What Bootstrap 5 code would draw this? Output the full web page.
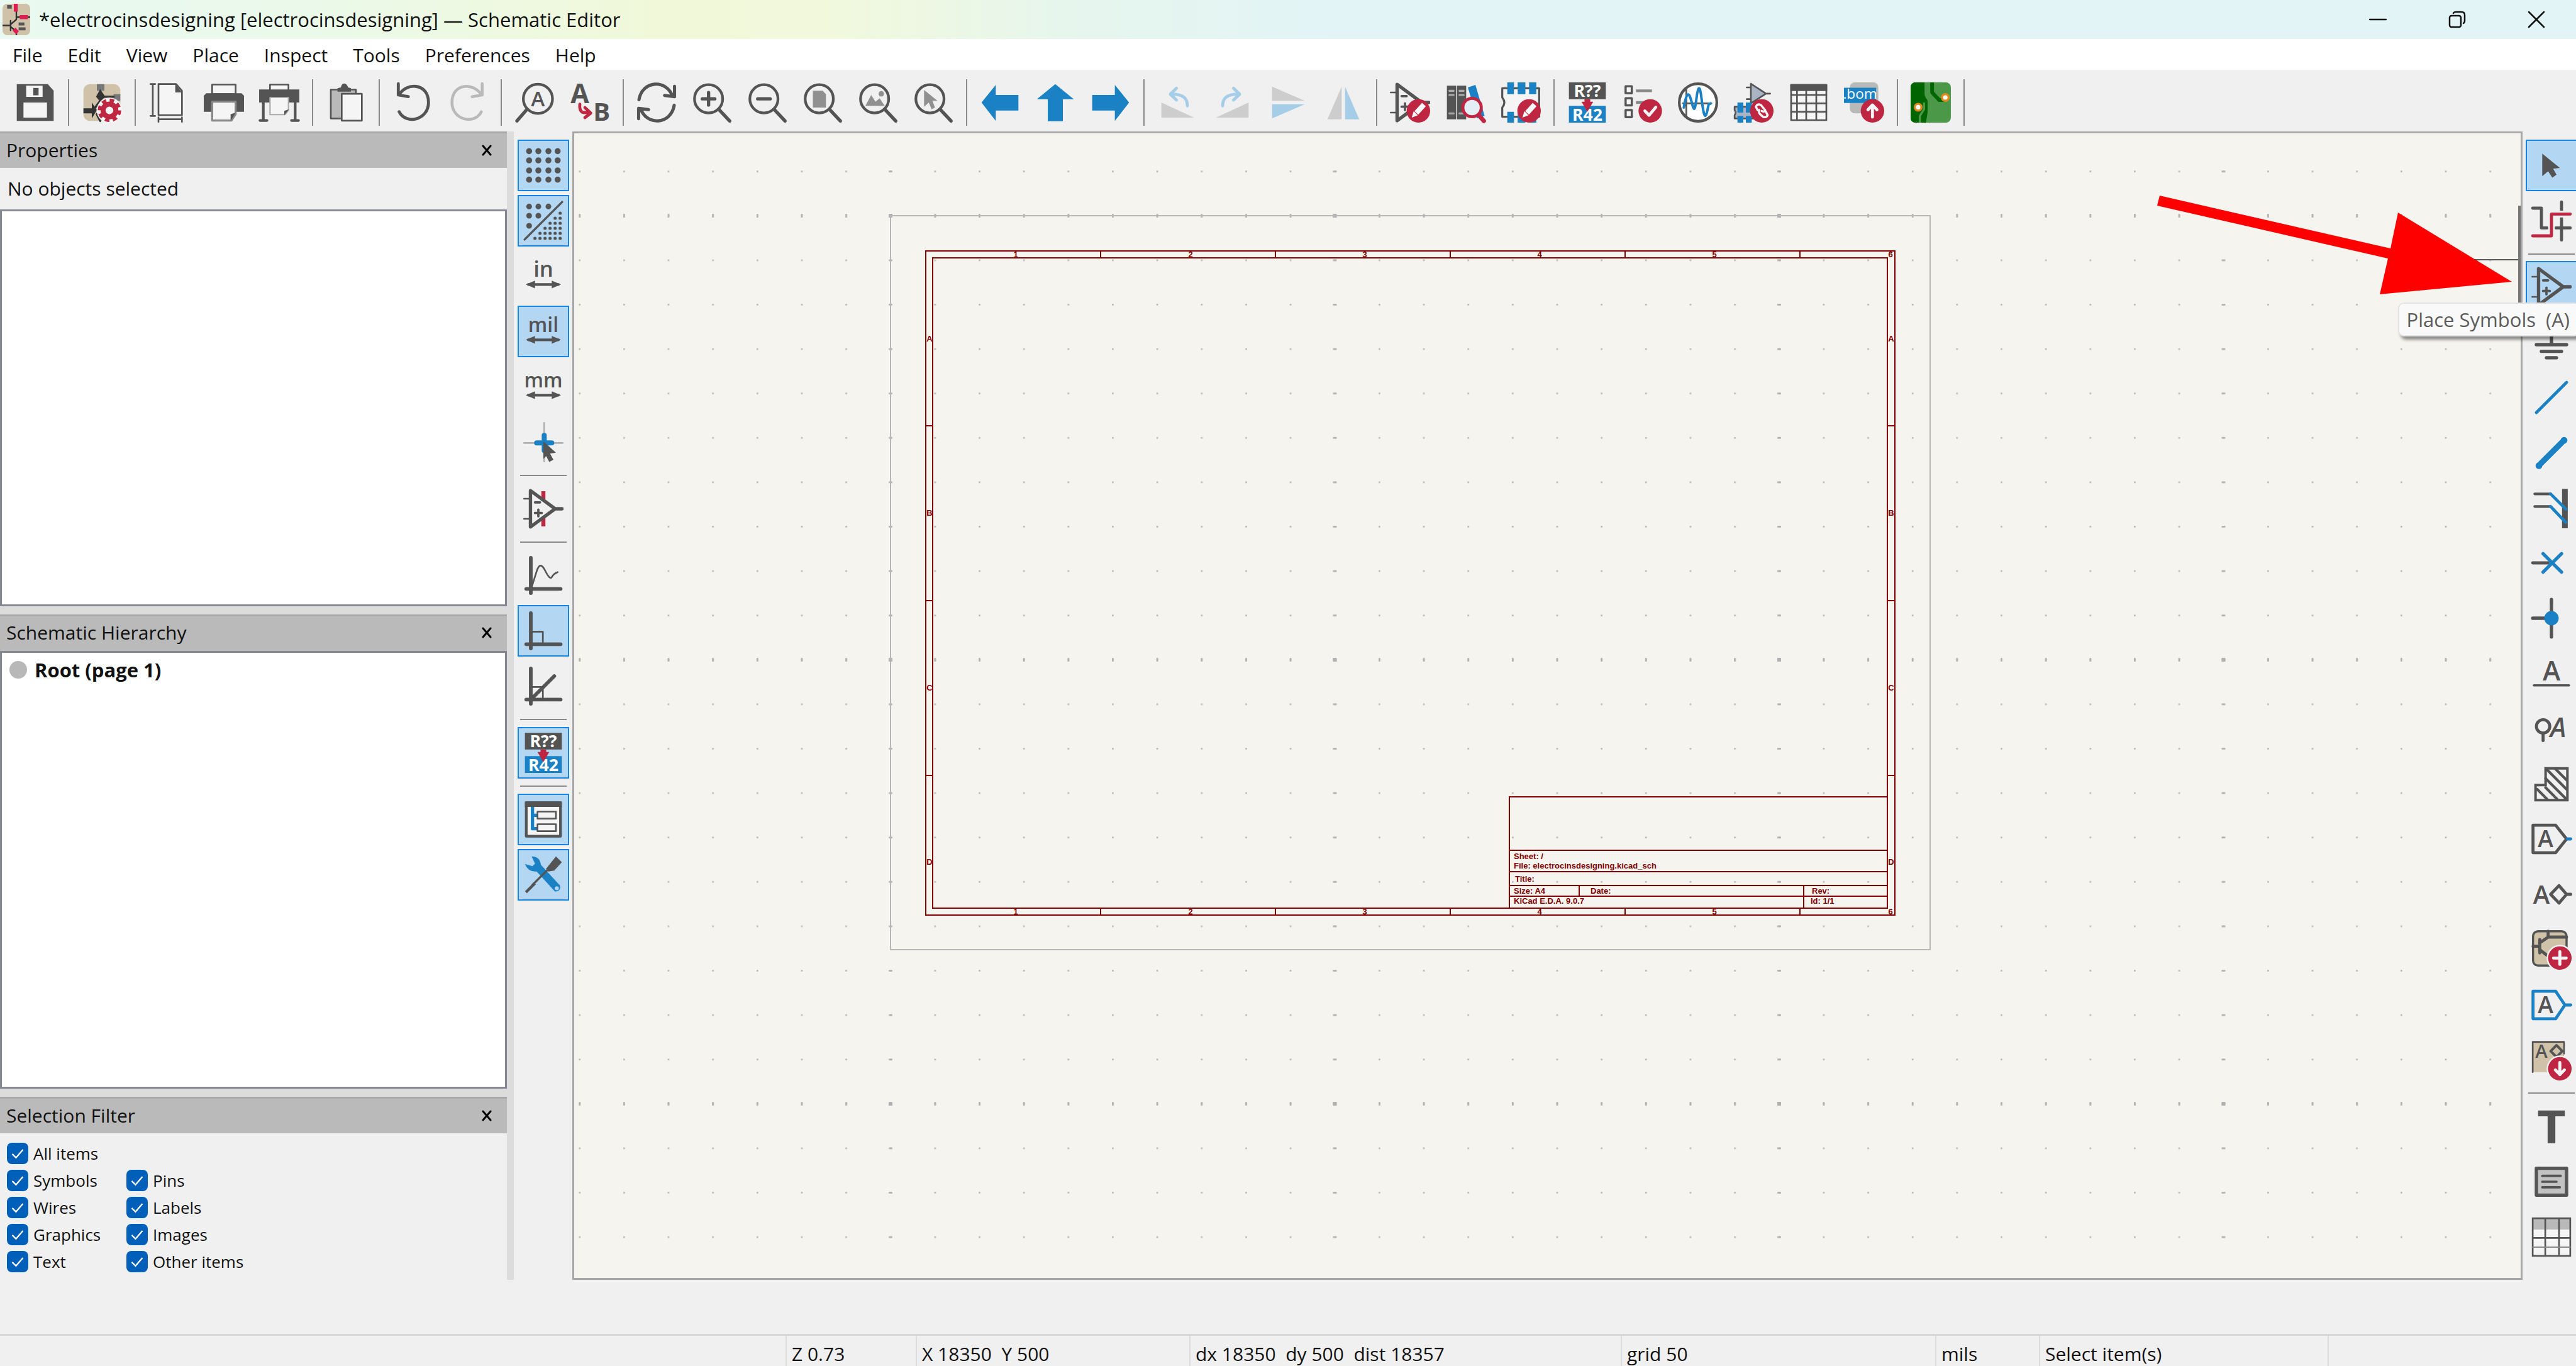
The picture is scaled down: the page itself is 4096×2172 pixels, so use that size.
<!DOCTYPE html>
<html lang="en">
<head>
<meta charset="utf-8">
<meta name="viewport" content="width=device-width, initial-scale=1">
<title>*electrocinsdesigning [electrocinsdesigning] — Schematic Editor</title>
<link href="https://cdn.jsdelivr.net/npm/bootstrap@5.3.0/dist/css/bootstrap.min.css" rel="stylesheet">
<style>
  :root { --ink:#545454; --blue:#1a81c4; --crimson:#bf2641; --tan:#cfc2a9; --face:#f0f0f0; --sash:#dcdcdc; }
  body { font-family:"Open Sans","Noto Sans",sans-serif; font-size:30px; line-height:40px; color:#111; background:var(--face); }
  .titlebar { height:62px; background:linear-gradient(90deg,#e9f9f1 0%,#eaf9e9 12%,#f1f8d9 26%,#f1f8dc 32%,#e6f6ee 42%,#e2f4f6 52%,#e2f4f6 100%); padding-left:4px; font-size:31px; }
  .titlebar .app-icon { width:44px; height:50px; margin-right:14px; }
  .win-btn { width:126px; height:62px; }
  .win-btn svg { width:28px; height:28px; }
  .menubar { height:49px; background:#fff; gap:40px; padding:3px 0 0 20px; }
  .menubar a { color:#111; text-decoration:none; }
  .toolbar-top { height:98px; gap:6px; padding:6px 15px 0; }
  .toolbar-side { gap:6px; padding:13px 6px 0; width:93px; }
  .toolbar-right { width:85px; padding:13px 0 27px 5px; }
  .tool { width:82px; height:82px; border:2px solid transparent; --bs-btn-padding-x:0; --bs-btn-padding-y:0; line-height:0; }
  .tool svg { width:64px; height:64px; overflow:visible; }
  .tool.active, .tool.active:hover { background:#b3d6f3; border-color:#1985e0; }
  .tool-sep-v { width:12px; height:74px; }
  .tool-sep-h { height:12px; width:74px; }
  .tool-sep-v::before { content:""; display:block; width:2px; height:100%; margin:auto; background:#8a8a8a; }
  .tool-sep-h::before { content:""; display:block; height:2px; width:100%; margin-top:5px; background:#8a8a8a; }
  svg { fill:none; stroke-linecap:round; stroke-linejoin:round; }
  svg:not([stroke-width]) { stroke-width:1.6; }
  svg text { font-family:"Open Sans","Noto Sans",sans-serif; fill:var(--ink); }
  .st { stroke:var(--ink); }
  .thin { stroke:var(--ink); } .thin:not([stroke-width]) { stroke-width:1; }
  .sb { stroke:var(--blue); } .sb:not([stroke-width]) { stroke-width:1.8; }
  .sr { stroke:var(--crimson); } .sr:not([stroke-width]) { stroke-width:1.8; }
  .fi { fill:var(--ink); } .fb { fill:var(--blue); } .fr { fill:var(--crimson); } .ft { fill:var(--tan); }
  .fw { fill:#f5f5f5; } .fg { fill:#b9b9b9; } .sw { stroke:#f5f5f5; stroke-width:1.8; }
  .dock { width:806px; }
  .sash-v { width:11px; background:var(--sash); }
  .sash-h { height:13px; background:var(--sash); }
  .pane { flex:1 1 0; min-height:0; }
  .pane-head { height:58px; background:#bababa; border-top:3px solid #a9a9a9; padding:0 22px 2px 10px; }
  .pane-head button { width:20px; height:20px; line-height:0; }
  .pane-head svg { width:16px; height:18px; stroke:#000; stroke-width:3; }
  .pane-box { background:#fff; border:3px solid #828790; }
  .note-line { height:66px; padding-left:12px; }
  .tree-row { padding:7px 12px; gap:12px; font-size:31px; }
  .tree-dot { width:28px; height:28px; border-radius:50%; background:#b8b8b8; }
  .filters { padding:15px 11px 12px; gap:9px; font-size:26px; line-height:34px; }
  .filters .pick { width:190px; gap:8px; height:34px; }
  .filters .form-check-input { width:34px; height:34px; margin:0; border:0; border-radius:8px; background-color:#005fb8;
    background-image:url("data:image/svg+xml,%3Csvg xmlns='http://www.w3.org/2000/svg' viewBox='0 0 20 20'%3E%3Cpath fill='none' stroke='%23fff' stroke-width='1.3' d='M5 10.5l3.5 3.5 6.5-7.5'/%3E%3C/svg%3E"); }
  .canvas-area { background:#f5f4ef; border:3px solid #a6a6a6; min-width:0; }
  .canvas-area svg text { font-family:"Liberation Sans",sans-serif; font-weight:bold; fill:#840000; font-size:13px; }
  .sheet-lines { stroke:#840000; stroke-width:2; stroke-linecap:butt; stroke-linejoin:miter; }
  .pointer { position:absolute; left:0; top:0; width:100%; height:100%; pointer-events:none; }
  .tip { position:absolute; right:-6px; top:272px; height:54px; padding:0 14px 0 12px; background:#f9f9f9; color:#5c5c5c; font-size:31px; line-height:50px; border:2px solid #e4e4e4; border-radius:9px; box-shadow:4px 5px 5px rgba(0,0,0,.45); white-space:pre; }
  .msg { height:86px; }
  .statusbar { height:51px; border-top:3px solid #d8d8d8; line-height:58px; }
  .statusbar > div { border-left:2px solid #dcdcdc; padding-left:8px; white-space:pre; overflow:hidden; }
</style>
</head>
<body class="vh-100 d-flex flex-column overflow-hidden">

<svg width="0" height="0" class="position-absolute" aria-hidden="true">
  <symbol id="opamp" viewBox="0 0 24 24">
    <path class="thin" d="M.5 6H4M.5 18H4"/><path class="st" stroke-width="2" d="M4.3 1.200V22.800L19 12ZM19 12H23.200"/><path class="st" stroke-width="1.400" d="M7 8.200H10M7 14.500H11M9 12.500V16.500"/>
  </symbol>
  <symbol id="pencil" viewBox="0 0 24 24">
    <circle class="fr" cx="17" cy="17" r="7"/><path d="M20.300 13.200L15.800 18.200" stroke="#fff" stroke-width="3" stroke-linecap="butt"/><path fill="#fff" d="M14.200 17.200L16.600 19.600 13 21Z"/>
  </symbol>
  <symbol id="lens" viewBox="0 0 24 24"><circle class="st" cx="10" cy="9.800" r="8.400"/><path class="st" stroke-width="2" d="M16 16L22.600 23"/></symbol>
</svg>

<header class="titlebar d-flex align-items-center flex-shrink-0">
  <svg class="app-icon" viewBox="0 0 24 26" preserveAspectRatio="none">
    <rect class="ft" x="0" y="0" width="24" height="26" rx="4"/><path stroke="#333" stroke-width="1.300" d="M0 18H7M7 14V22M7 17L12 13V2M7 19L12 23V26M12 11H24"/>
    <path stroke="#de1d55" stroke-width="3.400" stroke-linecap="butt" d="M11.500 0V6.500M15 11H22M10 21L13 24"/><path fill="#555" d="M4 1H8V4H4ZM14 15.500H19V18H14ZM14 19.500H20V22H14Z"/>
  </svg>
  <span class="flex-grow-1 text-nowrap">*electrocinsdesigning [electrocinsdesigning] — Schematic Editor</span>
  <button class="btn p-0 border-0 rounded-0 win-btn" aria-label="Minimize"><svg viewBox="0 0 28 28" stroke="#111" stroke-width="2.500"><path d="M1 14H27"/></svg></button>
  <button class="btn p-0 border-0 rounded-0 win-btn" aria-label="Restore"><svg viewBox="0 0 28 28" stroke="#111" stroke-width="2.500"><rect x="2" y="8" width="18" height="18" rx="3"/><path d="M8 4Q9 2 12 2H21Q26 2 26 7V16Q26 19 24 20"/></svg></button>
  <button class="btn p-0 border-0 rounded-0 win-btn" aria-label="Close"><svg viewBox="0 0 28 28" stroke="#111" stroke-width="2.500"><path d="M2 2L26 26M26 2L2 26"/></svg></button>
</header>

<nav class="menubar d-flex align-items-center flex-shrink-0">
  <a href="#">File</a><a href="#">Edit</a><a href="#">View</a><a href="#">Place</a><a href="#">Inspect</a><a href="#">Tools</a><a href="#">Preferences</a><a href="#">Help</a>
</nav>

<div class="toolbar-top d-flex align-items-center flex-shrink-0" role="toolbar" aria-label="Main toolbar">
  <button class="btn rounded-0 tool" aria-label="Save"><svg viewBox="0 0 24 24"><path class="fi" d="M1 1H19.500L23 5V23H1Z"/><path class="fw" d="M6.600 2H16.400V8.600H6.600ZM5 12H19V21H5Z"/><path class="fi" d="M10.800 3.300H14V7.700H10.800Z"/></svg></button>
  <div class="tool-sep-v"></div>
  <button class="btn rounded-0 tool" aria-label="Schematic setup"><svg viewBox="0 0 24 24"><rect class="ft" x="1" y="1" width="22" height="22" rx="4"/><path fill="#777" d="M9 1H13.500V5H9ZM19 7H23V11H19Z"/><path fill="#333" d="M11 4L14 8.500 11 11.500 8.500 8.500ZM1 15.500H6V12L9 16.500 6 21.500V18.500H1Z"/><path stroke="#333" stroke-width="1.300" d="M13 8.500H19M8 15L11 11M9 19L11 23"/>
    <circle cx="16.500" cy="16.700" r="7.600" fill="#f5f5f5"/><circle cx="16.500" cy="16.700" r="3.800" stroke="#bf2641" stroke-width="3"/><circle cx="16.500" cy="16.700" r="5.800" stroke="#bf2641" stroke-width="2.400" stroke-linecap="butt" stroke-dasharray="2.550 2"/></svg></button>
  <div class="tool-sep-v"></div>
  <button class="btn rounded-0 tool" aria-label="Page settings"><svg viewBox="0 0 24 24"><path class="thin" d="M2.600 1V20M1.200 1H4M1.200 20H4M6 22H20M6 20.800V23.500M20 20.800V23.500"/><path class="thin fw" d="M6 1H16.500L20 5V19.500H6Z"/><path class="fi" d="M16 1L20 6H16Z"/></svg></button>
  <button class="btn rounded-0 tool" aria-label="Print"><svg viewBox="0 0 24 24"><path class="thin fw" d="M5 1.300H19V7H5Z"/><path class="fi" d="M1.500 6.500H22.500L24 8V17.500H0V8Z"/><path class="fw" stroke="#888" stroke-width="1.200" d="M5 11.500H19V19L16.500 22.700H5Z"/><path class="fi" d="M19 18L16 19V23Z"/></svg></button>
  <button class="btn rounded-0 tool" aria-label="Plot"><svg viewBox="0 0 24 24"><path class="thin fw" d="M6.500 1.300H17.500V5H6.500Z"/><path class="fi" d="M0 4.200H24V12H0Z"/><path class="st" d="M2.500 12V22.500M21.500 12V22.500M.5 22.700H4.700M19.300 22.700H23.500"/><path class="fw" stroke="#aaa" stroke-width=".8" d="M6.500 9H17.500V16.500L15.500 19.200H6.500Z"/><path class="fi" d="M17.800 16L15 17V19.500Z"/></svg></button>
  <div class="tool-sep-v"></div>
  <button class="btn rounded-0 tool" aria-label="Paste"><svg viewBox="0 0 24 24"><path class="thin fg" d="M3 4.300H18V21.500H3Z"/><path class="fi" d="M7 5.500V3.500L9 3Q9.500 .7 11 .7T13.300 3L15 3.500V5.500Z"/><path class="thin fw" d="M9.500 6.800H21.500V22.800H9.500Z"/></svg></button>
  <div class="tool-sep-v"></div>
  <button class="btn rounded-0 tool" aria-label="Undo"><svg viewBox="0 0 24 24"><path class="st" stroke-width="1.800" d="M3.500 .8V7.500L9.500 8.500M4 7.500C8 0 21.500 0 21.500 12C21.500 22.500 8 25.500 4 17.500"/></svg></button>
  <button class="btn rounded-0 tool" aria-label="Redo"><svg viewBox="0 0 24 24"><path stroke="#b9b9b9" stroke-width="1.700" d="M20.500 .8V7.500L14.500 8.500M20 7.500C16 0 2.500 0 2.500 12C2.500 22.500 16 25.500 20 17.500"/></svg></button>
  <div class="tool-sep-v"></div>
  <button class="btn rounded-0 tool" aria-label="Find"><svg viewBox="0 0 24 24"><circle class="st" cx="14" cy="9.800" r="8.700"/><path class="st" stroke-width="2" d="M7.500 16L1.500 23"/><text x="14" y="14.300" font-size="12.500" font-weight="600" text-anchor="middle">A</text></svg></button>
  <button class="btn rounded-0 tool" aria-label="Find and replace"><svg viewBox="0 0 24 24"><text x="6" y="12.500" font-size="16" font-weight="bold" text-anchor="middle">A</text><text x="19" y="23" font-size="15" font-weight="bold" text-anchor="middle">B</text><path class="sr" d="M6 13Q5.500 18 9 18H12M9 15L12.500 18.300 9 21"/></svg></button>
  <div class="tool-sep-v"></div>
  <button class="btn rounded-0 tool" aria-label="Refresh"><svg viewBox="0 0 24 24"><path class="st" stroke-width="1.900" d="M1.500 10.300C3.500-1.300 18-2 21.500 8.300M22.700 2.400V8.500L16.800 7.800M22.500 13.700C20.500 25.300 6 26 2.500 15.700M1.300 21.600V15.500L7.200 16.200"/></svg></button>
  <button class="btn rounded-0 tool" aria-label="Zoom in"><svg viewBox="0 0 24 24"><use href="#lens"/><path class="st" stroke-width="2" d="M6.300 9.800H13.700M10 6.100V13.500"/></svg></button>
  <button class="btn rounded-0 tool" aria-label="Zoom out"><svg viewBox="0 0 24 24"><use href="#lens"/><path class="st" stroke-width="2" d="M6.300 9.800H13.700"/></svg></button>
  <button class="btn rounded-0 tool" aria-label="Zoom to fit"><svg viewBox="0 0 24 24"><use href="#lens"/><path fill="#909090" d="M6.200 5H12L14 7V15H6.200Z"/></svg></button>
  <button class="btn rounded-0 tool" aria-label="Zoom to objects"><svg viewBox="0 0 24 24"><use href="#lens"/><path fill="#909090" d="M4.500 14L8 7.500 10.500 11.500 13 9.500 16 14Z"/><circle fill="#909090" cx="14" cy="6.800" r="1.600"/></svg></button>
  <button class="btn rounded-0 tool" aria-label="Zoom to selection"><svg viewBox="0 0 24 24"><use href="#lens"/><path fill="#909090" d="M6.500 4.500L14.500 11H11.500L13 15 11 16 9.300 12 6.500 14.500Z"/></svg></button>
  <div class="tool-sep-v"></div>
  <button class="btn rounded-0 tool" aria-label="Navigate back"><svg viewBox="0 0 24 24"><path class="fb" d="M1 12L9.500 1.500V7.500H23V16.800H9.500V23Z"/></svg></button>
  <button class="btn rounded-0 tool" aria-label="Navigate up"><svg viewBox="0 0 24 24"><path class="fb" d="M12 1L23 10H16.500V23.200H7.500V10H1Z"/></svg></button>
  <button class="btn rounded-0 tool" aria-label="Navigate forward"><svg viewBox="0 0 24 24"><path class="fb" d="M23 12L14.500 1.500V7.500H1V16.800H14.500V23Z"/></svg></button>
  <div class="tool-sep-v"></div>
  <button class="btn rounded-0 tool" aria-label="Rotate left"><svg viewBox="0 0 24 24"><path fill="#cdcdcd" d="M2.500 12V21H22Z"/><path stroke="#a5cde8" stroke-width="1.800" d="M18 14C18 9 15 7 8.500 7M11.500 3.500L7.800 7 11.500 10.500"/></svg></button>
  <button class="btn rounded-0 tool" aria-label="Rotate right"><svg viewBox="0 0 24 24"><path fill="#cdcdcd" d="M21.500 12V21H2Z"/><path stroke="#a5cde8" stroke-width="1.800" d="M6 14C6 9 9 7 15.500 7M12.500 3.500L16.200 7 12.500 10.500"/></svg></button>
  <button class="btn rounded-0 tool" aria-label="Mirror vertically"><svg viewBox="0 0 24 24"><path fill="#cdcdcd" d="M2.500 2.500V11H22Z"/><path fill="#a5cde8" d="M2.500 21.500V13H22Z"/></svg></button>
  <button class="btn rounded-0 tool" aria-label="Mirror horizontally"><svg viewBox="0 0 24 24"><path fill="#cdcdcd" d="M2.500 22H11V2.500Z"/><path fill="#a5cde8" d="M21.500 22H13V2.500Z"/></svg></button>
  <div class="tool-sep-v"></div>
  <button class="btn rounded-0 tool" aria-label="Symbol editor"><svg viewBox="0 0 24 24"><use href="#opamp"/><use href="#pencil"/></svg></button>
  <button class="btn rounded-0 tool" aria-label="Symbol library browser"><svg viewBox="0 0 24 24"><path class="fi" d="M1 2H6.500V22H1ZM7 2H12.500V22H7Z"/><path d="M2.500 5H5M2.500 7.500H5M8.500 5H11M8.500 7.500H11M2.500 18.500H5M8.500 18.500H11" stroke="#aaa" stroke-width="1.200"/><path class="fb" d="M13.500 3L18 1.500 23.500 20 19 21.500Z"/><circle cx="16" cy="15" r="5.500" fill="#e4eef5" stroke="#bf2641" stroke-width="1.800"/><path class="sr" stroke-width="2.600" d="M20 19.500L23 23"/></svg></button>
  <button class="btn rounded-0 tool" aria-label="Footprint editor"><svg viewBox="0 0 24 24"><path class="st fw" stroke-width="1.200" d="M1 3.500H23V20.500H1V15Q3.500 12 1 9Z"/><path class="fb" d="M4 0H8V7H4ZM10.200 0H14.800V7H10.200ZM17 0H21.300V7H17ZM4 17.500H8V24H4ZM10.200 17.500H14.800V24H10.200ZM17 17.500H21.300V24H17Z"/><use href="#pencil"/></svg></button>
  <div class="tool-sep-v"></div>
  <button class="btn rounded-0 tool" aria-label="Annotate"><svg viewBox="0 0 24 24"><path class="fi" d="M1 0H23V10H1Z"/><path class="fb" d="M1 14H23V24H1Z"/><text x="12" y="8.600" font-size="10" font-weight="bold" text-anchor="middle" style="fill:#fff">R??</text><text x="12" y="22.700" font-size="10" font-weight="bold" text-anchor="middle" style="fill:#fff">R42</text><path class="fr" d="M10.300 10H13.700V11.500H15.500L12 17.500 8.500 11.500H10.300Z"/></svg></button>
  <button class="btn rounded-0 tool" aria-label="Electrical rules checker"><svg viewBox="0 0 24 24"><path class="thin fw" stroke-width="1.300" d="M1.800 2.300H5.500V6.500H1.800ZM1.800 9.500H5.500V13.700H1.800ZM1.800 16.500H5.500V20.700H1.800Z"/><path stroke="#888" stroke-width="1.600" stroke-linecap="butt" d="M8 5H17.500M8 12H14"/><circle class="fr" cx="16.500" cy="17" r="7"/><path class="sw" d="M13.300 17L15.800 19.600 19.800 14.800"/></svg></button>
  <button class="btn rounded-0 tool" aria-label="Simulator"><svg viewBox="0 0 24 24"><circle class="st" cx="12" cy="12" r="11.200" style="fill:#fff"/><path class="thin" d="M5 4V20M3 12.500H20"/><path class="sb" stroke-width="1.500" d="M3.500 15C5 6 6.500 5 8 11S10 18 11 10 13 1 14 9 16 24 17.500 17 18 14 19.500 12.500"/></svg></button>
  <button class="btn rounded-0 tool" aria-label="Assign footprints"><svg viewBox="0 0 24 24"><path class="thin" fill="#a9b5c4" d="M10.500 .8V12.500L19.500 6.700ZM8 3H10.500M8 10H10.500M19.500 6.700H22"/><path class="thin" fill="#a9b5c4" d="M.8 14.500H16V21.500H.8V19.500Q2 18 .8 16.500Z"/><path class="fb" d="M2.500 12H6V18H2.500ZM7.500 12H11V18H7.500ZM2.500 20H6V24H2.500ZM7.500 20H11V24H7.500Z"/><circle class="fr" cx="17" cy="17" r="7"/><path stroke="#f5f5f5" stroke-width="1.300" d="M14.500 16.500L13.500 14.500Q14.500 12.500 16.500 13.500L19 16.500Q18.500 18 17 17M15.500 16.500Q15 18 16 19L18 20.700Q20 21 20.500 19.500L19.500 17.500"/></svg></button>
  <button class="btn rounded-0 tool" aria-label="Bulk edit fields"><svg viewBox="0 0 24 24"><path class="thin fw" d="M1.500 1.500H22.500V22.500H1.500Z"/><path class="fi" d="M1 1H23V5.200H1Z"/><path class="thin" d="M1.500 7.500H22.500M1.500 12.500H22.500M1.500 17.500H22.500M5 5V22.500M10.500 5V22.500M16.500 5V22.500"/></svg></button>
  <button class="btn rounded-0 tool" aria-label="Generate BOM"><svg viewBox="0 0 24 24"><rect class="fg" x="3.500" y="0" width="17" height="18.500" rx="3"/><path class="fb" d="M0 3.200H19.200V12.300H0Z"/><text x="9.600" y="9.800" font-size="8.500" text-anchor="middle" style="fill:#fff">.bom</text><circle class="fr" cx="17" cy="17" r="7"/><path class="sw" d="M17 20.700V13.700M14.300 16.300L17 13.500 19.700 16.300"/></svg></button>
  <div class="tool-sep-v"></div>
  <button class="btn rounded-0 tool" aria-label="Open PCB editor"><svg viewBox="0 0 24 24"><rect x="0" y="0" width="24" height="24" rx="3" fill="#4a9848"/><path fill="#006400" d="M3 0H4V11L8.500 14V24H3Q0 24 0 21V3Q0 0 3 0Z"/><path stroke="#006400" stroke-width="2.200" stroke-linecap="butt" d="M3 0V14M7.200 0V7Q7.500 9.500 9 11V18L8 24M12.800 0V6L17 10.500H20"/><path fill="#006400" d="M2 0H8V8L10 12 6 16H2Z"/><path stroke="#4a9848" stroke-width="1.300" stroke-linecap="butt" d="M10.300 0V7L13 12V17L11 24M5.500 24V20L8 16V12"/><circle cx="20.700" cy="9" r="2" fill="#fff" stroke="#e08a1e" stroke-width="1.300"/><circle cx="4.500" cy="14.800" r="2" fill="#fff" stroke="#e08a1e" stroke-width="1.300"/></svg></button>
  <div class="tool-sep-v"></div>
</div>

<main class="d-flex flex-grow-1 position-relative overflow-hidden" style="min-height:0">
  <aside class="dock d-flex flex-column flex-shrink-0">
    <section class="pane d-flex flex-column">
      <div class="pane-head d-flex align-items-center justify-content-between"><span>Properties</span><button class="btn p-0 border-0" aria-label="Close Properties"><svg viewBox="0 0 16 18"><path d="M2 2L14 16M14 2L2 16"/></svg></button></div>
      <div class="note-line d-flex align-items-center">No objects selected</div>
      <div class="pane-box flex-grow-1"></div>
    </section>
    <div class="sash-h"></div>
    <section class="pane d-flex flex-column">
      <div class="pane-head d-flex align-items-center justify-content-between"><span>Schematic Hierarchy</span><button class="btn p-0 border-0" aria-label="Close Schematic Hierarchy"><svg viewBox="0 0 16 18"><path d="M2 2L14 16M14 2L2 16"/></svg></button></div>
      <div class="pane-box flex-grow-1">
        <div class="tree-row d-flex align-items-center"><span class="tree-dot"></span><b>Root (page 1)</b></div>
      </div>
    </section>
    <div class="sash-h"></div>
    <section>
      <div class="pane-head d-flex align-items-center justify-content-between"><span>Selection Filter</span><button class="btn p-0 border-0" aria-label="Close Selection Filter"><svg viewBox="0 0 16 18"><path d="M2 2L14 16M14 2L2 16"/></svg></button></div>
      <div class="filters d-flex flex-column">
        <div class="d-flex"><label class="pick d-flex align-items-center"><input type="checkbox" class="form-check-input" checked>All items</label></div>
        <div class="d-flex"><label class="pick d-flex align-items-center"><input type="checkbox" class="form-check-input" checked>Symbols</label><label class="pick d-flex align-items-center"><input type="checkbox" class="form-check-input" checked>Pins</label></div>
        <div class="d-flex"><label class="pick d-flex align-items-center"><input type="checkbox" class="form-check-input" checked>Wires</label><label class="pick d-flex align-items-center"><input type="checkbox" class="form-check-input" checked>Labels</label></div>
        <div class="d-flex"><label class="pick d-flex align-items-center"><input type="checkbox" class="form-check-input" checked>Graphics</label><label class="pick d-flex align-items-center"><input type="checkbox" class="form-check-input" checked>Images</label></div>
        <div class="d-flex"><label class="pick d-flex align-items-center"><input type="checkbox" class="form-check-input" checked>Text</label><label class="pick d-flex align-items-center text-nowrap"><input type="checkbox" class="form-check-input flex-shrink-0" checked>Other items</label></div>
      </div>
    </section>
  </aside>
  <div class="sash-v flex-shrink-0"></div>

  <div class="toolbar-side d-flex flex-column align-items-center flex-shrink-0" role="toolbar" aria-label="Display options">
    <button class="btn rounded-0 tool active" aria-label="Show grid"><svg viewBox="0 0 24 24"><path stroke="#545454" stroke-width="3.600" d="M3.500 3.500h.01M9 3.500h.01M15 3.500h.01M20.500 3.500h.01M3.500 9h.01M9 9h.01M15 9h.01M20.500 9h.01M3.500 15h.01M9 15h.01M15 15h.01M20.500 15h.01M3.500 20.500h.01M9 20.500h.01M15 20.500h.01M20.500 20.500h.01"/></svg></button>
    <button class="btn rounded-0 tool active" aria-label="Grid overrides"><svg viewBox="0 0 24 24"><path stroke="#545454" stroke-width="3.400" d="M3.500 3.500h.01M9 3.500h.01M15 3.500h.01M3.500 9h.01M9 9h.01M3.500 15h.01"/><path class="st" stroke-width="1.300" d="M.8 23.200L23.200 .8"/><path stroke="#545454" stroke-width="1.900" d="M22 7.500h.01M19 10.500h.01M22 10.500h.01M16 13.500h.01M19 13.500h.01M22 13.500h.01M13 16.500h.01M16 16.500h.01M19 16.500h.01M22 16.500h.01M10 19.500h.01M13 19.500h.01M16 19.500h.01M19 19.500h.01M22 19.500h.01M7 22.500h.01M10 22.500h.01M13 22.500h.01M16 22.500h.01M19 22.500h.01M22 22.500h.01"/></svg></button>
    <button class="btn rounded-0 tool" aria-label="Inches"><svg viewBox="0 0 24 24"><text x="12" y="12.500" font-size="13" font-weight="600" text-anchor="middle">in</text><path class="st" d="M3 17H21"/><path class="fi" d="M1.500 17L7 14.700V19.300ZM22.500 17L17 14.700V19.300Z"/></svg></button>
    <button class="btn rounded-0 tool active" aria-label="Mils"><svg viewBox="0 0 24 24"><text x="12" y="12.500" font-size="12" font-weight="600" text-anchor="middle">mil</text><path class="st" d="M3 17H21"/><path class="fi" d="M1.500 17L7 14.700V19.300ZM22.500 17L17 14.700V19.300Z"/></svg></button>
    <button class="btn rounded-0 tool" aria-label="Millimeters"><svg viewBox="0 0 24 24"><text x="12" y="12.500" font-size="12" font-weight="600" text-anchor="middle">mm</text><path class="st" d="M3 17H21"/><path class="fi" d="M1.500 17L7 14.700V19.300ZM22.500 17L17 14.700V19.300Z"/></svg></button>
    <button class="btn rounded-0 tool" aria-label="Full-window crosshairs"><svg viewBox="0 0 24 24"><path stroke="#b0b0b0" stroke-width="1" d="M.5 12.500H23.500M12.500 .5V23.500"/><path stroke="#1a81c4" stroke-width="3" d="M8 12.500H17M12.500 8V17"/><path class="fi" d="M12 11.500L19.500 18.300 16 18.800 18 22.500 15.500 23.800 13.700 20.300 12 22Z"/></svg></button>
    <div class="tool-sep-h"></div>
    <button class="btn rounded-0 tool" aria-label="Show hidden pins"><svg viewBox="0 0 24 24"><path stroke="#bf2641" stroke-width="2.400" stroke-linecap="butt" d="M12 1.500V6.500M12 17.500V22.500"/><use href="#opamp"/></svg></button>
    <div class="tool-sep-h"></div>
    <button class="btn rounded-0 tool" aria-label="Free angle"><svg viewBox="0 0 24 24"><path class="st" stroke-width="2.200" d="M4.500 1.500V22.500M1.800 20H22.300"/><path class="thin" d="M5 19L8 9.500Q10 3 13 9T17 13 20.500 10"/></svg></button>
    <button class="btn rounded-0 tool active" aria-label="90 degree lines"><svg viewBox="0 0 24 24"><path class="st" stroke-width="2.200" d="M4.500 1.500V22.500M1.800 20H22.300"/><path class="thin" d="M5 12.500H11.700V20"/></svg></button>
    <button class="btn rounded-0 tool" aria-label="45 degree lines"><svg viewBox="0 0 24 24"><path class="st" stroke-width="2.200" d="M4.500 1.500V22.500M1.800 20H22.300M5 19.500L18.500 6"/><path class="thin" d="M5 12.500H11.700V20"/></svg></button>
    <div class="tool-sep-h"></div>
    <button class="btn rounded-0 tool active" aria-label="Annotate automatically"><svg viewBox="0 0 24 24"><path class="fi" d="M1 0H23V10H1Z"/><path class="fb" d="M1 14H23V24H1Z"/><text x="12" y="8.600" font-size="10" font-weight="bold" text-anchor="middle" style="fill:#fff">R??</text><text x="12" y="22.700" font-size="10" font-weight="bold" text-anchor="middle" style="fill:#fff">R42</text><path class="fr" d="M10.300 10H13.700V11.500H15.500L12 17.500 8.500 11.500H10.300Z"/></svg></button>
    <div class="tool-sep-h"></div>
    <button class="btn rounded-0 tool active" aria-label="Show hierarchy"><svg viewBox="0 0 24 24"><path class="st fw" d="M1.800 2H22.200V22H1.800Z"/><path class="fi" d="M1 1.200H23V4.500H1Z"/><path stroke="#1a81c4" stroke-width="2" stroke-linecap="butt" d="M5.500 4.500V17.500H8.500M5.500 9.500H8.500"/><path class="thin" d="M8.500 7.300H19.500V11.500H8.500ZM8.500 14.800H19.500V19H8.500Z"/></svg></button>
    <button class="btn rounded-0 tool active" aria-label="Show properties"><svg viewBox="0 0 24 24"><path class="fb" d="M5 1Q10 1 10.500 6L22 18.500Q22.500 22 19 22L8 10Q3 10.500 1 5.500L5.500 6.800 7 5.300Z"/><circle cx="20" cy="20" r="1.200" fill="#b3d6f3"/><path class="fi" d="M19.500 1L23 4.500 18.500 9.500 15 10 13.500 8.500Z"/><path class="st" stroke-width="1.200" d="M14 9.500L5.500 18"/><path class="fi" d="M6.300 16.500L7.500 17.700 2.200 23 1 21.800Z"/></svg></button>
  </div>

  <div class="canvas-area flex-grow-1">
    <svg class="d-block w-100 h-100" aria-label="Schematic sheet">
      <defs>
        <pattern id="dots" patternUnits="userSpaceOnUse" x="468" y="96" width="70.650" height="70.600"><path fill="#b2b2b2" d="M34 34H36.500V36.500H34Z"/></pattern>
        <pattern id="rowmarks" patternUnits="userSpaceOnUse" x="468" y="96" width="70.650" height="706"><path fill="#b2b2b2" d="M34 32H36.500V38H34Z"/></pattern>
        <pattern id="colmarks" patternUnits="userSpaceOnUse" x="468" y="96" width="706.500" height="70.600"><path fill="#b2b2b2" d="M32 34H38V36.500H32Z"/></pattern>
        <pattern id="bothmarks" patternUnits="userSpaceOnUse" x="468" y="96" width="706.500" height="706"><path fill="#b2b2b2" d="M32 32H38V38H32Z"/></pattern>
      </defs>
      <rect width="100%" height="100%" fill="url(#dots)"/><rect width="100%" height="100%" fill="url(#rowmarks)"/><rect width="100%" height="100%" fill="url(#colmarks)"/><rect width="100%" height="100%" fill="url(#bothmarks)"/>
      <!-- sheet drawn in window coordinates, shifted to the canvas origin -->
      <g transform="translate(-913 -212)">
        <rect x="1416" y="343" width="1653" height="1167" stroke="#b7b7b7" stroke-width="2"/>
        <g class="sheet-lines">
          <path d="M1472 399H3013V1455H1472ZM1483 410H3001V1444H1483Z"/>
          <path d="M1750 399V410M2028 399V410M2306 399V410M2584 399V410M2862 399V410M1750 1444V1455M2028 1444V1455M2306 1444V1455M2584 1444V1455M2862 1444V1455M1472 677H1483M1472 955H1483M1472 1233H1483M3001 677H3013M3001 955H3013M3001 1233H3013"/>
          <path d="M2400 1444V1267H3001M2400 1352H3001M2400 1386H3001M2400 1408H3001M2400 1425H3001M2511 1408V1425M2868 1408V1444"/>
        </g>
        <g text-anchor="middle">
          <text x="1615" y="409">1</text><text x="1893" y="409">2</text><text x="2170" y="409">3</text><text x="2448" y="409">4</text><text x="2726" y="409">5</text><text x="3006" y="409">6</text>
          <text x="1615" y="1454">1</text><text x="1893" y="1454">2</text><text x="2170" y="1454">3</text><text x="2448" y="1454">4</text><text x="2726" y="1454">5</text><text x="3006" y="1454">6</text>
          <text x="1478" y="543">A</text><text x="1478" y="820">B</text><text x="1478" y="1098">C</text><text x="1478" y="1375">D</text>
          <text x="3007" y="543">A</text><text x="3007" y="820">B</text><text x="3007" y="1098">C</text><text x="3007" y="1375">D</text>
        </g>
        <text x="2407" y="1366">Sheet: /</text><text x="2407" y="1381">File: electrocinsdesigning.kicad_sch</text>
        <text x="2409" y="1402">Title:</text><text x="2407" y="1421">Size: A4</text><text x="2529" y="1421">Date:</text><text x="2881" y="1421">Rev:</text>
        <text x="2407" y="1437">KiCad E.D.A. 9.0.7</text><text x="2879" y="1437">Id: 1/1</text>
        <path stroke="#555" stroke-width="2" d="M3920 413H4008"/><path stroke="#777" stroke-width="4" stroke-linecap="butt" d="M4006 327V500"/>
      </g>
    </svg>
  </div>

  <div class="toolbar-right d-flex flex-column justify-content-between align-items-start flex-shrink-0 overflow-hidden" role="toolbar" aria-label="Drawing tools">
    <button class="btn rounded-0 tool active" aria-label="Select"><svg viewBox="0 0 24 24"><path class="fi" d="M6.500 5L17 13.500 13 14 15 17.500 12.500 19.300 10 15.500 6.500 18.500Z"/></svg></button>
    <button class="btn rounded-0 tool" aria-label="Highlight nets"><svg viewBox="0 0 24 24"><path class="st" stroke-width="1.800" d="M.8 4.500H6V16.300H9.500M14.500 16.300H23.200M18 .8V23.500"/><path d="M1 21H12V8H23" stroke="#f0f0f0" stroke-width="4"/><path class="sr" d="M.8 21H12V8H23.200"/></svg></button>
    <div class="tool-sep-h ms-1"></div>
    <button class="btn rounded-0 tool active" aria-label="Place symbols"><svg viewBox="0 0 24 24"><use href="#opamp"/></svg></button>
    <button class="btn rounded-0 tool" aria-label="Place power symbols"><svg viewBox="0 0 24 24"><path class="st" stroke-width="2" d="M12 3V13M3 13.500H21M6 17.500H18M9 21.300H15"/></svg></button>
    <button class="btn rounded-0 tool" aria-label="Draw wires"><svg viewBox="0 0 24 24"><path class="sb" d="M3 21L21 3"/></svg></button>
    <button class="btn rounded-0 tool" aria-label="Draw buses"><svg viewBox="0 0 24 24"><path stroke="#1a81c4" stroke-width="3.400" d="M4.500 19.500L19.500 4.500"/><path stroke="#1a81c4" stroke-width="4" d="M4.500 19.700h.01M19.500 4.500h.01"/></svg></button>
    <button class="btn rounded-0 tool" aria-label="Wire to bus entries"><svg viewBox="0 0 24 24"><path class="st" d="M2 3.500H11M2 11H11"/><path stroke="#545454" stroke-width="3.400" stroke-linecap="butt" d="M20 .5V24"/><path class="sb" d="M11.500 3.500L20.500 12.500M11.500 11L20.500 20.500"/></svg></button>
    <button class="btn rounded-0 tool" aria-label="No-connect flags"><svg viewBox="0 0 24 24"><path class="st" stroke-width="1.800" d="M.8 12H10"/><path class="sb" stroke-width="2" d="M7 6.500L18 17.500M18 6.500L7 17.500"/></svg></button>
    <button class="btn rounded-0 tool" aria-label="Junctions"><svg viewBox="0 0 24 24"><path class="st" stroke-width="2" d="M.8 12H12M12 .8V23.200"/><circle class="fb" cx="12" cy="12" r="4.300"/></svg></button>
    <button class="btn rounded-0 tool" aria-label="Net labels"><svg viewBox="0 0 24 24"><text x="12" y="16" font-size="16" font-weight="600" text-anchor="middle">A</text><path class="st" stroke-width="1.300" d="M1.500 19H22.500"/></svg></button>
    <button class="btn rounded-0 tool" aria-label="Net class directives"><svg viewBox="0 0 24 24"><circle class="st" stroke-width="1.800" cx="7" cy="10.500" r="4"/><path class="st" stroke-width="1.800" d="M7 14.500V19"/><text x="16" y="17" font-size="16" font-style="italic" font-weight="600" text-anchor="middle">A</text></svg></button>
    <button class="btn rounded-0 tool" aria-label="Rule areas"><svg viewBox="0 0 24 24"><path class="st" stroke-width="1.500" stroke-linejoin="miter" d="M2.500 12.500H8.500V2.500H21.500V21.500H2.500Z"/><path class="st" d="M9.500 3.500L21 15M14.500 3L21 9.500M8.500 8.500L21 21M8.500 14L15.500 21M3.500 15L9.500 21"/></svg></button>
    <button class="btn rounded-0 tool" aria-label="Global labels"><svg viewBox="0 0 24 24"><path class="st" stroke-width="1.800" d="M1 3.800H14.500L21 12 14.500 20.200H1Z"/><path class="sb" d="M21.500 12H23.500"/><text x="8.500" y="17" font-size="14" font-weight="600" text-anchor="middle">A</text></svg></button>
    <button class="btn rounded-0 tool" aria-label="Hierarchical labels"><svg viewBox="0 0 24 24"><text x="6" y="17.500" font-size="15" font-weight="600" text-anchor="middle">A</text><path class="st" stroke-width="1.800" d="M11.500 12L16.500 6.800 21 12 16.500 17.200ZM21 12H23.500"/></svg></button>
    <button class="btn rounded-0 tool" aria-label="Draw sheets"><svg viewBox="0 0 24 24"><rect class="st ft" stroke-width="1.300" x="1" y="1" width="20" height="20.500" rx="3"/><path class="st" stroke-width="1.800" d="M1 10H5M5 6V14M5 8L10 4.500V1M10 4.500H21M5 12L9.500 15.500"/><circle cx="17" cy="17" r="7.900" fill="#f0f0f0"/><circle class="fr" cx="17" cy="17" r="7"/><path class="sw" d="M13.200 17H20.800M17 13.200V20.800"/></svg></button>
    <button class="btn rounded-0 tool" aria-label="Sheet pins"><svg viewBox="0 0 24 24"><path class="sb" d="M1 3.800H14.500L20 12 14.500 20.200H1ZM20 12H23.500"/><text x="8.500" y="17" font-size="14" font-weight="600" text-anchor="middle">A</text></svg></button>
    <button class="btn rounded-0 tool" aria-label="Sync sheet pins"><svg viewBox="0 0 24 24"><path class="ft" d="M.8 1H19.500V19H.8Z"/><path class="thin" d="M.8 19V1H19.500V8"/><text x="6" y="10.500" font-size="11" font-weight="600" text-anchor="middle">A</text><path class="thin" stroke-width="1.500" d="M11.500 6.500L15 3 18.500 6.500 15 10Z"/><circle cx="17" cy="17" r="7.900" fill="#f0f0f0"/><circle class="fr" cx="17" cy="17" r="7"/><path class="sw" d="M17 13.300V20.300M14.300 17.700L17 20.500 19.700 17.700"/></svg></button>
    <div class="tool-sep-h ms-1"></div>
    <button class="btn rounded-0 tool" aria-label="Text"><svg viewBox="0 0 24 24"><path class="fi" d="M4 2.500H20V6H14.300V22H9.700V6H4Z"/></svg></button>
    <button class="btn rounded-0 tool" aria-label="Text boxes"><svg viewBox="0 0 24 24"><rect x="3" y="4" width="18" height="16" fill="#c2c2c2" stroke="#545454" stroke-width="2"/><path class="thin" stroke-width="1.400" d="M6.500 8.500H17.500M6.500 12H15M6.500 15.300H17"/></svg></button>
    <button class="btn rounded-0 tool" aria-label="Tables"><svg viewBox="0 0 24 24"><path class="fw" d="M.8 .8H23.200V23.200H.8Z"/><path class="fg" d="M.8 .8H23.200V7.500H.8Z"/><path class="st" stroke-linejoin="miter" stroke-width="1" d="M.8 .8H23.200V23.200H.8ZM.8 12.500H23.200M8.300 .8V23.200M16.500 .8V23.200"/><path stroke="#888" stroke-width=".7" d="M.8 18H23.200"/></svg></button>
  </div>

  <svg class="pointer" aria-hidden="true"><path transform="translate(0 -209)" fill="#f00" d="M3434 311L3801 395 3813 338 3994 448 3784 468 3797 411 3430 327Z"/></svg>
  <div class="tip" role="tooltip">Place Symbols  (A)</div>
</main>

<div class="msg flex-shrink-0"></div>
<footer class="statusbar d-flex flex-shrink-0">
  <div class="border-0" style="width:1249px"></div>
  <div style="width:207px">Z 0.73</div>
  <div style="width:435px">X 18350  Y 500</div>
  <div style="width:686px">dx 18350  dy 500  dist 18357</div>
  <div style="width:500px">grid 50</div>
  <div style="width:165px">mils</div>
  <div style="width:459px">Select item(s)</div>
  <div class="flex-grow-1"></div>
</footer>
<script src="https://cdn.jsdelivr.net/npm/bootstrap@5.3.0/dist/js/bootstrap.bundle.min.js"></script>
</body>
</html>
